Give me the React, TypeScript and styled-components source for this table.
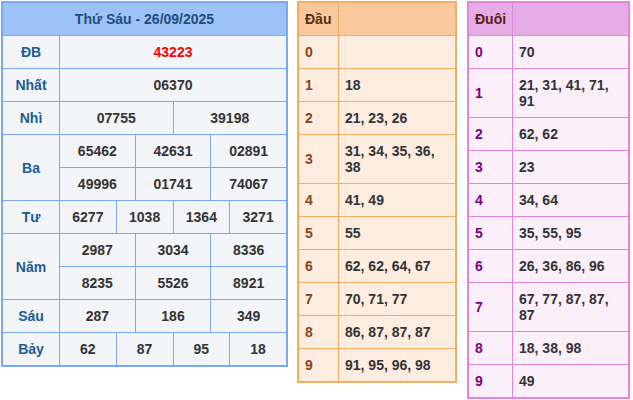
import styled, { createGlobalStyle } from "styled-components";

type Prize = { label: string; cols: number; values: string[]; special?: boolean };

type Tone = {
  border: string;
  head: string;
  cell: string;
  headText: string;
  key: string;
  width: number;
  keyWidth: number;
};

const prizes: Prize[] = [
  { label: "ĐB", cols: 1, values: ["43223"], special: true },
  { label: "Nhất", cols: 1, values: ["06370"] },
  { label: "Nhì", cols: 2, values: ["07755", "39198"] },
  { label: "Ba", cols: 3, values: ["65462", "42631", "02891", "49996", "01741", "74067"] },
  { label: "Tư", cols: 4, values: ["6277", "1038", "1364", "3271"] },
  { label: "Năm", cols: 3, values: ["2987", "3034", "8336", "8235", "5526", "8921"] },
  { label: "Sáu", cols: 3, values: ["287", "186", "349"] },
  { label: "Bảy", cols: 4, values: ["62", "87", "95", "18"] },
];

const orange: Tone = {
  border: "#f6ac63",
  head: "#f9c99d",
  cell: "#fdede1",
  headText: "#5a2d0c",
  key: "#8b4513",
  width: 160,
  keyWidth: 39,
};

const pink: Tone = {
  border: "#e584e0",
  head: "#e4abe7",
  cell: "#fbeffa",
  headText: "#5a2010",
  key: "#800080",
  width: 163,
  keyWidth: 43,
};

// hai số cuối của mọi giải
const tails = prizes.flatMap((p) => p.values.map((v) => v.slice(-2))).sort();

const byHead = (d: number) => tails.filter((t) => t[0] === String(d)).join(", ");
const byTail = (d: number) => tails.filter((t) => t[1] === String(d)).join(", ");

export default function App() {
  return (
    <>
      <GlobalStyle />
      <Page>
        <ResultTable />
        <LotoTable title="Đầu" tone={orange} lookup={byHead} />
        <LotoTable title="Đuôi" tone={pink} lookup={byTail} />
      </Page>
    </>
  );
}

function ResultTable() {
  return (
    <ResultGrid>
      <ResultHead>Thứ Sáu - 26/09/2025</ResultHead>
      {prizes.map((p) => (
        <Fragmentish key={p.label} prize={p} />
      ))}
    </ResultGrid>
  );
}

function Fragmentish({ prize }: { prize: Prize }) {
  const rows = prize.values.length / prize.cols;
  return (
    <>
      <PrizeLabel $rows={rows}>{prize.label}</PrizeLabel>
      {prize.values.map((v, i) => (
        <PrizeValue key={i} $span={12 / prize.cols} $special={!!prize.special}>
          {v}
        </PrizeValue>
      ))}
    </>
  );
}

function LotoTable({
  title,
  tone,
  lookup,
}: {
  title: string;
  tone: Tone;
  lookup: (d: number) => string;
}) {
  return (
    <LotoGrid $tone={tone}>
      <LotoHead $tone={tone}>{title}</LotoHead>
      <LotoHead $tone={tone} />
      {Array.from({ length: 10 }, (_, d) => (
        <LotoRow key={d} digit={d} text={lookup(d)} tone={tone} />
      ))}
    </LotoGrid>
  );
}

function LotoRow({ digit, text, tone }: { digit: number; text: string; tone: Tone }) {
  return (
    <>
      <LotoKey $tone={tone}>{digit}</LotoKey>
      <LotoValue $tone={tone}>{text}</LotoValue>
    </>
  );
}

const GlobalStyle = createGlobalStyle`
  body {
    margin: 0;
    background: #fff;
    font-family: "Liberation Sans", Arial, sans-serif;
  }
`;

const Page = styled.div`
  display: flex;
  align-items: flex-start;
  gap: 9px;
  padding: 1px 0 0 1px;
`;

// Kết quả
const ResultGrid = styled.div`
  width: 287px;
  box-sizing: border-box;
  display: grid;
  grid-template-columns: 56px repeat(12, 1fr);
  gap: 1px;
  background: #7aa9f5;
  border: 2px solid #7aa9f5;
  font-size: 14px;
  font-weight: bold;
  line-height: 16px;
`;
const ResultHead = styled.div`
  grid-column: 1 / -1;
  background: #9cc2f8;
  color: #1f4d7c;
  text-align: center;
  padding: 8px 0;
`;
const PrizeLabel = styled.div<{ $rows: number }>`
  grid-column: 1;
  grid-row: span ${({ $rows }) => $rows};
  display: flex;
  align-items: center;
  justify-content: center;
  background: #f3f5f9;
  color: #1b5c97;
  padding: 8px 0;
`;
const PrizeValue = styled.div<{ $span: number; $special: boolean }>`
  grid-column: span ${({ $span }) => $span};
  background: #f3f5f9;
  color: ${({ $special }) => ($special ? "#ff0000" : "#333")};
  text-align: center;
  padding: 8px 0;
`;

// Lô tô
const LotoGrid = styled.div<{ $tone: Tone }>`
  width: ${({ $tone }) => $tone.width}px;
  box-sizing: border-box;
  display: grid;
  grid-template-columns: ${({ $tone }) => $tone.keyWidth}px 1fr;
  gap: 1px;
  background: ${({ $tone }) => $tone.border};
  border: 2px solid ${({ $tone }) => $tone.border};
  font-size: 14px;
  font-weight: bold;
  line-height: 16px;
  & + & {
    margin-left: 1px;
  }
`;
const LotoHead = styled.div<{ $tone: Tone }>`
  background: ${({ $tone }) => $tone.head};
  color: ${({ $tone }) => $tone.headText};
  padding: 8px 6px;
  min-height: 16px;
`;
const LotoKey = styled.div<{ $tone: Tone }>`
  display: flex;
  align-items: center;
  background: ${({ $tone }) => $tone.cell};
  color: ${({ $tone }) => $tone.key};
  padding: 8px 6px;
`;
const LotoValue = styled.div<{ $tone: Tone }>`
  background: ${({ $tone }) => $tone.cell};
  color: #333;
  padding: 8px 6px;
  min-height: 16px;
`;
